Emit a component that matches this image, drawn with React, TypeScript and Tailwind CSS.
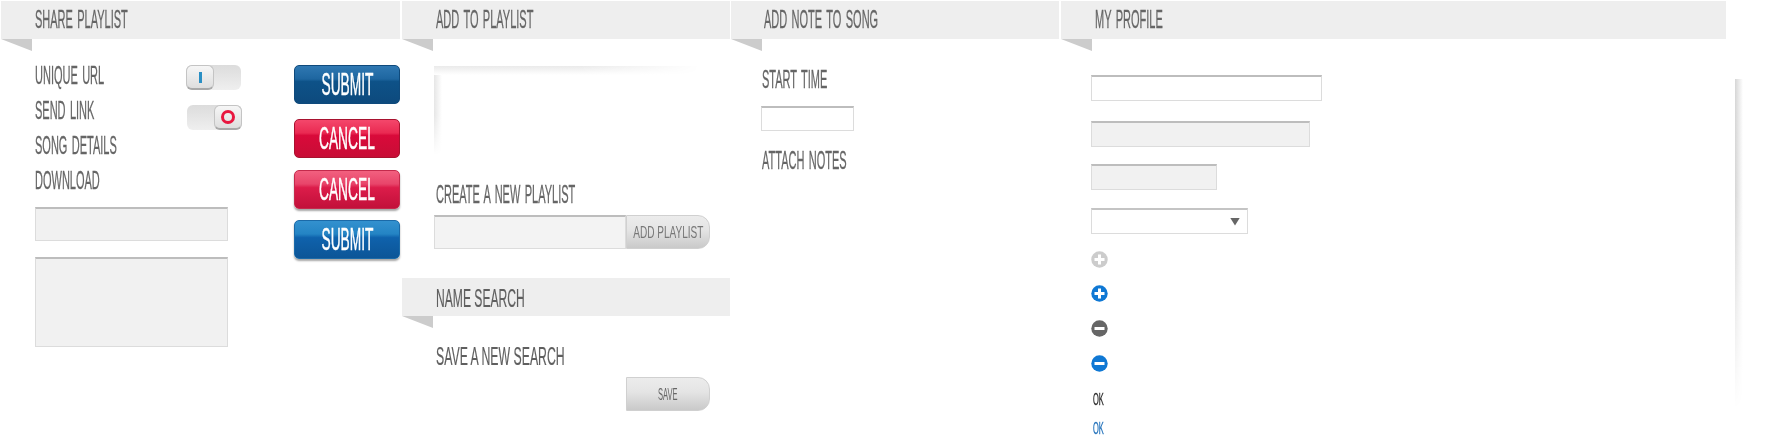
import React from "react";

const SectionHeader: React.FC<{ title: string; alt?: boolean; tight?: boolean }> = ({ title, alt, tight }) => (
  <div>
    <div className={`flex h-[38px] items-center bg-[#eeeeee] ${tight ? "pl-[33px]" : "pl-[34px]"} ${alt ? "pt-[2px]" : "pb-[1px]"}`}>
      <span
        className={
          alt
            ? "origin-left scale-x-[0.484] whitespace-nowrap font-['Liberation_Sans'] text-[25px] leading-none text-[#5f5f5f] [-webkit-text-stroke:0.2px_#5f5f5f]"
            : "origin-left scale-x-[0.44] whitespace-nowrap font-['Liberation_Sans'] text-[25px] leading-none text-[#666666] [word-spacing:3px] [-webkit-text-stroke:0.3px_#666666]"
        }
      >
        {title}
      </span>
    </div>
    <div className="h-[12px] w-[31px] bg-[#cccccc] [clip-path:polygon(0_0,100%_0,100%_100%)]" />
  </div>
);

const Label: React.FC<{ children: React.ReactNode; alt?: boolean }> = ({ children, alt }) => (
  <div className="flex h-[24px] items-center">
    <span
      className={
        alt
          ? "origin-left scale-x-[0.491] whitespace-nowrap font-['Liberation_Sans'] text-[25px] leading-none text-[#5f5f5f] [-webkit-text-stroke:0.2px_#5f5f5f]"
          : "origin-left scale-x-[0.44] whitespace-nowrap font-['Liberation_Sans'] text-[25px] leading-none text-[#666666] [word-spacing:3px] [-webkit-text-stroke:0.3px_#666666]"
      }
    >
      {children}
    </span>
  </div>
);

const Field: React.FC<{ className: string }> = ({ className }) => (
  <div className={`border border-[#dcdcdc] border-t-2 border-t-[#bdbdbd] ${className}`} />
);

const BigButton: React.FC<{ label: string; className: string }> = ({ label, className }) => (
  <div className={`flex h-[39px] w-[106px] items-center justify-center rounded-[5px] border pb-[2px] ${className}`}>
    <span className="scale-x-[0.43] font-['Liberation_Sans'] text-[32px] leading-none text-white [-webkit-text-stroke:0.5px_#ffffff]">{label}</span>
  </div>
);

const GreyButton: React.FC<{ label: string; small?: boolean }> = ({ label, small }) => (
  <div className="flex h-[34px] w-[84px] items-center justify-center rounded-r-[12px] border border-[#d0d0d0] bg-[linear-gradient(#ececec,#e4e4e4_45%,#c9c9c9)] pt-[1px]">
    <span
      className={
        small
          ? "scale-x-[0.47] font-['Liberation_Sans'] text-[16px] leading-none text-[#666666]"
          : "scale-x-[0.59] whitespace-nowrap font-['Liberation_Sans'] text-[17px] leading-none text-[#777777]"
      }
    >
      {label}
    </span>
  </div>
);

const Toggle: React.FC<{ on?: boolean; className?: string }> = ({ on, className }) => (
  <div
    className={`flex h-[25px] w-[55px] rounded-[6px] bg-[linear-gradient(#dcdcdc,#efefef)] ${on ? "justify-end" : "justify-start"} ${className ?? ""}`}
  >
    <div className="flex h-[25px] w-[28px] items-center justify-center rounded-[6px] border border-[#c4c4c4] border-b-2 border-b-[#a9a9a9] bg-[linear-gradient(#f6f6f6,#dedede)]">
      {on ? (
        <div className="h-[14px] w-[14px] rounded-full border-[3px] border-[#e8173f]" />
      ) : (
        <div className="h-[11px] w-[3px] bg-[#2a8fc4]" />
      )}
    </div>
  </div>
);

const RoundIcon: React.FC<{ color: string; minus?: boolean }> = ({ color, minus }) => (
  <svg width="17" height="17" viewBox="0 0 17 17" className="block">
    <circle cx="8.5" cy="8.5" r="8.2" fill={color} />
    <rect x="3.5" y="7" width="10" height="3" fill="#ffffff" />
    {!minus && <rect x="7" y="3.5" width="3" height="10" fill="#ffffff" />}
  </svg>
);

const App: React.FC = () => {
  return (
    <div className="relative flex h-[435px] w-[1788px] items-start overflow-hidden bg-white pt-px">
      <section className="ml-px w-[399px] shrink-0">
        <SectionHeader title="SHARE PLAYLIST" />
        <div className="flex">
          <div className="w-[293px] shrink-0 pl-[34px]">
            <div className="flex">
              <div className="w-[151px] shrink-0 pt-[7px]">
                {["UNIQUE URL", "SEND LINK", "SONG DETAILS", "DOWNLOAD"].map((item) => (
                  <div key={item} className="h-[35px] py-[5px]">
                    <Label>{item}</Label>
                  </div>
                ))}
              </div>
              <div className="pt-[14px]">
                <Toggle />
                <Toggle on className="ml-px mt-[15px]" />
              </div>
            </div>
            <Field className="mt-[9px] h-[34px] w-[193px] bg-[#f1f1f1]" />
            <Field className="mt-[16px] h-[90px] w-[193px] bg-[#f1f1f1]" />
          </div>
          <div className="w-[106px] shrink-0 pt-[14px]">
            <BigButton label="SUBMIT" className="border-[#0f4a7c] bg-[linear-gradient(#2f78b2,#1e66a0_35%,#0e5288_42%,#0d4a7d)]" />
            <BigButton label="CANCEL" className="mt-[15px] border-[#a8122f] bg-[linear-gradient(#f4476b,#ea2a52_35%,#d90a3a_42%,#c80d36)]" />
            <BigButton label="CANCEL" className="mt-[12px] border-[#c42a4c] bg-[linear-gradient(#f2607f,#e8456a_35%,#dc1c4a_45%,#c2103a)] shadow-[0_2px_2px_rgba(0,0,0,0.35)]" />
            <BigButton label="SUBMIT" className="mt-[11px] border-[#1b6aa8] bg-[linear-gradient(#3391cf,#2484c4_35%,#0f62ac_45%,#0c5597)] shadow-[0_2px_2px_rgba(0,0,0,0.35)]" />
          </div>
        </div>
      </section>

      <section className="ml-[2px] w-[328px] shrink-0">
        <SectionHeader title="ADD TO PLAYLIST" />
        <div className="ml-[32px] mt-[15px] flex h-[89px] w-[266px] flex-col">
          <div className="h-[9px] bg-[linear-gradient(#eaeaea,#ffffff)] [mask-image:linear-gradient(to_right,black_55%,transparent)]" />
          <div className="w-[8px] flex-1 bg-[linear-gradient(to_right,#e6e6e6,#ffffff)] [mask-image:linear-gradient(to_bottom,black_50%,transparent)]" />
        </div>
        <div className="ml-[34px] mt-[27px]">
          <Label>CREATE A NEW PLAYLIST</Label>
        </div>
        <div className="ml-[32px] mt-[9px] flex">
          <Field className="h-[34px] w-[192px] bg-[#f3f3f3]" />
          <GreyButton label="ADD PLAYLIST" />
        </div>
        <div className="mt-[29px]">
          <SectionHeader title="NAME SEARCH" alt />
        </div>
        <div className="ml-[34px] mt-[16px]">
          <Label alt>SAVE A NEW SEARCH</Label>
        </div>
        <div className="ml-[224px] mt-[9px]">
          <GreyButton label="SAVE" small />
        </div>
      </section>

      <section className="ml-px w-[328px] shrink-0">
        <SectionHeader title="ADD NOTE TO SONG" tight />
        <div className="ml-[31px] mt-[16px]">
          <Label>START TIME</Label>
        </div>
        <Field className="ml-[30px] mt-[15px] h-[25px] w-[93px] bg-white" />
        <div className="ml-[31px] mt-[17px]">
          <Label>ATTACH NOTES</Label>
        </div>
      </section>

      <section className="ml-[2px] w-[665px] shrink-0">
        <SectionHeader title="MY PROFILE" />
        <div className="pl-[30px]">
          <Field className="mt-[24px] h-[26px] w-[231px] bg-white" />
          <Field className="mt-[20px] h-[26px] w-[219px] bg-[#f1f1f1]" />
          <Field className="mt-[17px] h-[26px] w-[126px] bg-[#f1f1f1]" />
          <div className="mt-[18px] flex h-[26px] w-[157px] items-center justify-end border border-[#dcdcdc] border-t-2 border-t-[#c4c4c4] pr-[7px]">
            <div className="h-[8px] w-[10px] bg-[#666666] [clip-path:polygon(0_0,100%_0,50%_100%)]" />
          </div>
          <div className="mt-[17px] flex flex-col">
            <RoundIcon color="#cccccc" />
            <div className="mt-[17px]">
              <RoundIcon color="#0f78d4" />
            </div>
            <div className="mt-[18px]">
              <RoundIcon color="#666666" minus />
            </div>
            <div className="mt-[18px]">
              <RoundIcon color="#0f78d4" minus />
            </div>
          </div>
          <div className="ml-[2px] mt-[22px] h-[12px] origin-left scale-x-[0.44] font-['Liberation_Sans'] text-[17px] leading-[12px] text-[#222222] [-webkit-text-stroke:0.3px_#222222]">OK</div>
          <div className="ml-[2px] mt-[17px] h-[12px] origin-left scale-x-[0.44] font-['Liberation_Sans'] text-[17px] leading-[12px] text-[#1a6cb8] [-webkit-text-stroke:0.3px_#1a6cb8]">OK</div>
        </div>
      </section>

      <div className="ml-[9px] mt-[78px] h-[330px] w-[8px] shrink-0 bg-[linear-gradient(to_right,#d6d6d6,#ffffff)] [mask-image:linear-gradient(to_bottom,black_35%,transparent)]" />
    </div>
  );
};

export default App;
